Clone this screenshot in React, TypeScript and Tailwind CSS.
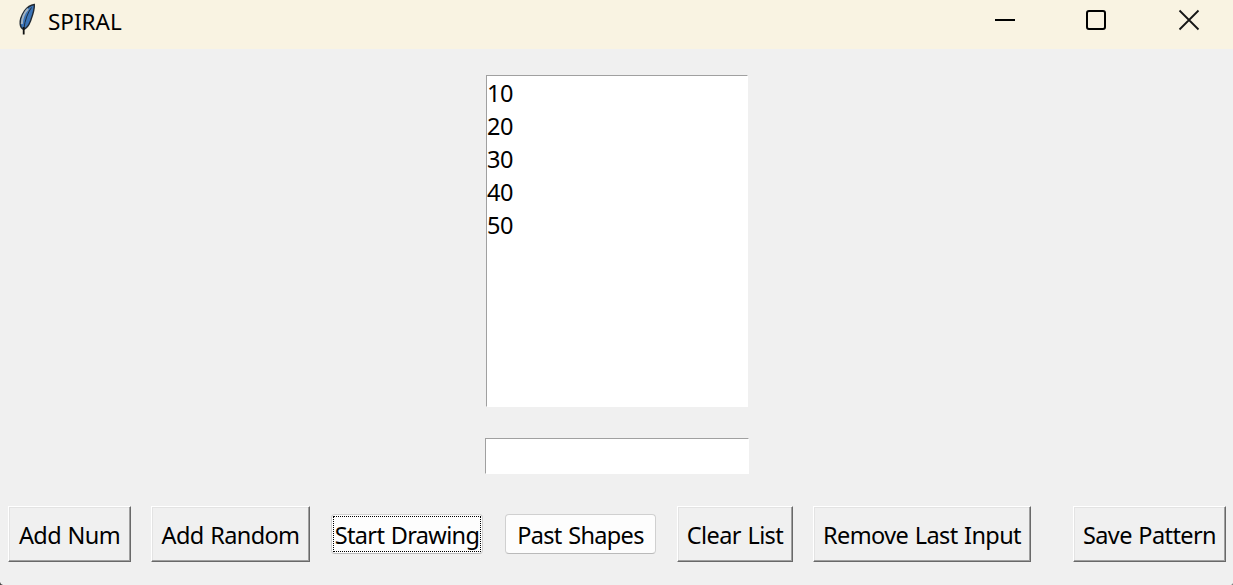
import type { ReactNode } from "react";

const numbers = [10, 20, 30, 40, 50];

function Feather() {
  return (
    <svg width="18" height="34" viewBox="0 0 18 34" fill="none">
      <path d="M16.3 1.5C12.5 2 9 4.5 6.5 8C3.5 12.5 1.8 17 2.2 21C2.4 23.5 3.6 25.5 5.5 26.5C8.5 25.5 11 22 12.5 18C14.5 12.5 16.8 6.5 16.3 1.5Z" fill="#3b74b8" stroke="#222a33" strokeWidth="1.4" />
      <path d="M10 5.8C6.5 9.5 4 15 3.8 21" stroke="#a3b3c2" strokeWidth="2" />
      <path d="M13.5 4.5C9.5 10 7 17 5.8 26" stroke="#1d2d40" strokeWidth="1" />
      <path d="M5.7 24V31.5" stroke="#111" strokeWidth="1.8" />
    </svg>
  );
}

function TitleBar() {
  return (
    <header className="flex h-[49px] shrink-0 items-start bg-[#f9f3e2]">
      <div className="pl-[18px] pt-[3px]"><Feather /></div>
      <h1 className="ml-[12px] mt-[6px] whitespace-nowrap text-[22.5px] leading-[32px] tracking-[0px]">SPIRAL</h1>
      <div className="ml-auto flex pr-[33px] pt-[9px]">
        <svg width="22" height="22" viewBox="0 0 22 22"><path d="M1 11H21" stroke="#000" strokeWidth="2" /></svg>
        <svg className="ml-[69px]" width="22" height="22" viewBox="0 0 22 22"><rect x="2" y="2" width="18" height="18" rx="2" fill="none" stroke="#000" strokeWidth="2" /></svg>
        <svg className="ml-[71px]" width="22" height="22" viewBox="0 0 22 22"><path d="M1.5 1.5L20.5 20.5M20.5 1.5L1.5 20.5" stroke="#151515" strokeWidth="1.8" /></svg>
      </div>
    </header>
  );
}

function RaisedButton({ className, children }: { className: string; children: ReactNode }) {
  return (
    <button className={`flex h-[56px] shrink-0 justify-center whitespace-nowrap border border-b-[#696969] border-l-white border-r-[#696969] border-t-white pt-[12px] leading-[32px] tracking-[-0.6px] [word-spacing:1px] shadow-[inset_-1px_-1px_#a0a0a0,inset_1px_1px_#e3e3e3] ${className}`}>
      {children}
    </button>
  );
}

export default function App() {
  return (
    <main className="flex h-[585px] w-[1233px] flex-col overflow-hidden bg-[#f0f0f0] font-['Noto_Sans','Open_Sans',sans-serif] text-[23.5px] text-black">
      <TitleBar />
      <ul className="ml-[486px] mt-[26px] h-[332px] w-[262px] shrink-0 border border-b-white border-l-[#a0a0a0] border-r-white border-t-[#a0a0a0] bg-white pt-[1px]">
        {numbers.map((n) => (
          <li key={n} className="h-[33px] leading-[33px] tracking-[-0.5px]">{n}</li>
        ))}
      </ul>
      <input aria-label="Number" className="ml-[485px] mt-[31px] h-[36px] w-[264px] shrink-0 border border-b-white border-l-[#a0a0a0] border-r-white border-t-[#a0a0a0] bg-white outline-none" />
      <div className="ml-[8px] mt-[32px] flex h-[56px] shrink-0 items-start">
        <RaisedButton className="w-[123px]">Add Num</RaisedButton>
        <RaisedButton className="ml-[20px] w-[159px]">Add Random</RaisedButton>
        <button className="ml-[21px] mt-[8px] h-[40px] w-[152px] shrink-0 rounded-[4px] border border-[#d0d0d0] border-b-[#bababa] bg-[#fdfdfd] p-px">
          <span className="flex h-[36px] justify-center whitespace-nowrap border border-dotted border-black pt-[2px] leading-[32px] tracking-[-0.65px] [word-spacing:1px]">Start Drawing</span>
        </button>
        <button className="ml-[22px] mt-[8px] flex h-[40px] w-[151px] shrink-0 justify-center whitespace-nowrap rounded-[4px] border border-[#d0d0d0] border-b-[#bababa] bg-[#fdfdfd] pt-[4px] leading-[32px] tracking-[-0.65px] [word-spacing:1px]">Past Shapes</button>
        <RaisedButton className="ml-[21px] w-[116px]">Clear List</RaisedButton>
        <RaisedButton className="ml-[20px] w-[218px]">Remove Last Input</RaisedButton>
        <RaisedButton className="ml-[42px] w-[153px]">Save Pattern</RaisedButton>
      </div>
      <div className="mt-auto flex h-[3px] items-end justify-between">
        <svg width="3" height="3" viewBox="0 0 3 3"><path d="M0 0Q0.5 2.5 3 3H0Z" fill="#444" /></svg>
        <svg width="3" height="3" viewBox="0 0 3 3"><path d="M3 1Q2.5 2.5 1 3H3Z" fill="#777" /></svg>
      </div>
    </main>
  );
}
